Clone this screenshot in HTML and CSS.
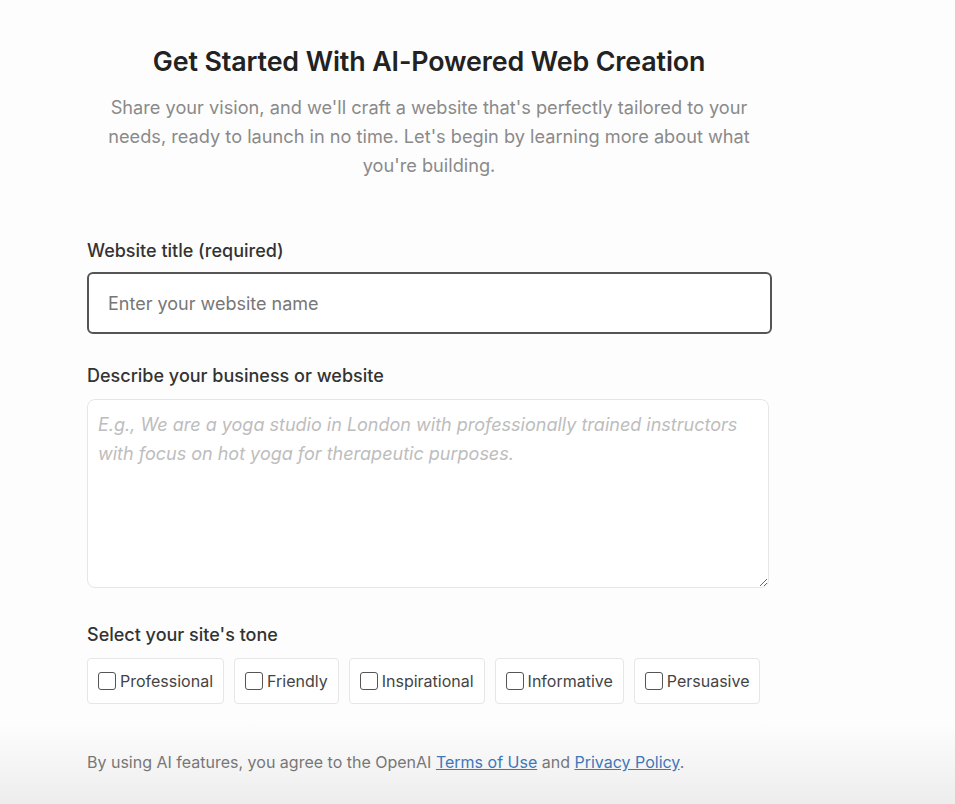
FILE: index.html
```html
<!DOCTYPE html>
<html lang="en">

<head>
  <meta charset="UTF-8" />
  <meta name="viewport" content="width=device-width, initial-scale=1.0" />
  <title>Get Started</title>
  <link rel="stylesheet" href="styles.css">
</head>

<body>
  <div class="page">
    <div class="intro">
      <h1 class="title">Get Started With AI-Powered Web Creation</h1>
      <p class="subtitle">Share your vision, and we'll craft a website that's perfectly tailored to your needs, ready to launch in no time. Let's begin by learning more about what you're building.</p>
    </div>

    <div class="field">
      <label class="label" for="site-title">Website title (required)</label>
      <input id="site-title" class="text-input" type="text" placeholder="Enter your website name">
    </div>

    <div class="field field-wide">
      <label class="label" for="site-desc">Describe your business or website</label>
      <textarea id="site-desc" class="text-area" placeholder="E.g., We are a yoga studio in London with professionally trained instructors with focus on hot yoga for therapeutic purposes."></textarea>
    </div>

    <div class="field">
      <div class="label">Select your site's tone</div>
      <div class="tones">
        <label class="tone"><span class="box"></span>Professional</label>
        <label class="tone"><span class="box"></span>Friendly</label>
        <label class="tone"><span class="box"></span>Inspirational</label>
        <label class="tone"><span class="box"></span>Informative</label>
        <label class="tone"><span class="box"></span>Persuasive</label>
      </div>
    </div>

    <p class="terms">By using AI features, you agree to the OpenAI <a href="#">Terms of Use</a> and <a href="#">Privacy Policy</a>.</p>
  </div>
</body>

</html>
```

FILE: styles.css
```css
html,
body {
  height: 100%;
}

body {
  margin: 0;
  padding: 0;
  font-family: Inter, 'Noto Sans', sans-serif;
  background: linear-gradient(to bottom, #fdfdfd 0%, #fdfdfd 90%, #ededed 100%);
  color: #2b2b2b;
}

.page {
  width: 684px;
  margin-left: 87px;
  padding-top: 44px;
}

.intro {
  text-align: center;
  margin-bottom: 59px;
}

.title {
  margin: 0;
  font-size: 26.8px;
  font-weight: 600;
  color: #222;
  line-height: 34px;
  letter-spacing: -0.1px;
}

.subtitle {
  margin: 15px auto 0;
  width: 660px;
  font-size: 18.2px;
  line-height: 29px;
  color: #8a8a8a;
}

.field {
  margin-bottom: 30px;
}

.field-wide {
  margin-bottom: 35px;
}

.label {
  display: block;
  font-size: 18px;
  font-weight: 500;
  color: #333;
  line-height: 24px;
  margin-bottom: 11px;
}

.text-input {
  box-sizing: border-box;
  width: 685px;
  height: 62px;
  margin-top: -2px;
  padding: 0 19px;
  border: 2px solid #555;
  border-radius: 6px;
  font-family: inherit;
  font-size: 18px;
  color: #333;
  background: #fff;
  outline: none;
}

.text-input::placeholder {
  color: #777;
}

.text-area {
  display: block;
  box-sizing: border-box;
  width: 682px;
  height: 189px;
  padding: 10px 10px;
  border: 1px solid #e6e6e6;
  border-radius: 8px;
  font-family: inherit;
  font-size: 18px;
  line-height: 29px;
  color: #333;
  background: #fff;
  resize: vertical;
  outline: none;
}

.text-area::placeholder {
  color: #bdbdbd;
  font-style: italic;
}

.tones {
  display: flex;
  gap: 10px;
}

.tone {
  box-sizing: border-box;
  display: flex;
  align-items: center;
  gap: 4px;
  height: 46px;
  padding: 0 10px;
  border: 1px solid #e6e6e6;
  border-radius: 4px;
  background: #fff;
  font-size: 16px;
  color: #444;
  cursor: pointer;
}

.box {
  box-sizing: border-box;
  width: 18px;
  height: 18px;
  border: 1.5px solid #555;
  border-radius: 3px;
  background: #fff;
}

.terms {
  margin: 48px 0 0;
  font-size: 16px;
  color: #777;
}

.terms a {
  color: #3f77b8;
}
```
